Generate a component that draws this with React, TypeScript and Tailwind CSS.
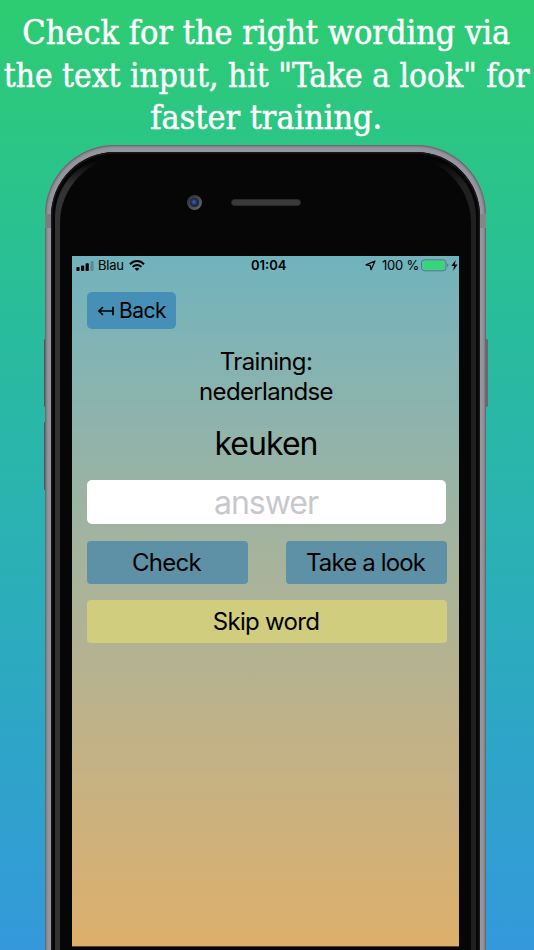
import React from "react";

function Signal() {
  return (
    <svg className="block" width="18" height="10" viewBox="0 0 18 10">
      <rect x="0.4" y="6" width="3.2" height="4" rx="0.8" />
      <rect x="5" y="4.5" width="3.2" height="5.5" rx="0.8" />
      <rect x="9.6" y="2.2" width="3.2" height="7.8" rx="0.8" />
      <rect x="14.4" y="0" width="3.2" height="10" rx="0.8" opacity="0.22" />
    </svg>
  );
}

function Wifi() {
  return (
    <svg className="block" width="16" height="11" viewBox="0 0 16 11">
      <g fill="none" stroke="#000" strokeWidth="2">
        <path d="M1 4.2C5 0 11 0 15 4.2" />
        <path d="M3.6 6.9c2.5-2.5 6.3-2.5 8.8 0" />
      </g>
      <path d="M5.6 8.6c1.4-1.3 3.4-1.3 4.8 0L8 11z" />
    </svg>
  );
}

function StatusBar() {
  return (
    <div className="flex h-[19px] items-center pl-[4px] text-[13px] leading-none">
      <Signal />
      <span className="ml-[4px] w-[26px] whitespace-nowrap tracking-[-0.2px]">Blau</span>
      <span className="ml-[5px]"><Wifi /></span>
      <span className="ml-[106px] w-[36px] whitespace-nowrap font-semibold">01:04</span>
      <svg className="ml-[78px] block" width="11" height="11" viewBox="0 0 11 11">
        <path d="M10 1 6 9.8 5.2 5.6 1 4.9z" fill="none" stroke="#000" strokeWidth="1.2" strokeLinejoin="round" />
      </svg>
      <span className="ml-[6px] w-[37px] whitespace-nowrap tracking-[-0.2px]">100 %</span>
      <svg className="ml-[2px] block" width="38" height="13" viewBox="0 0 38 13">
        <rect x="0.5" y="0.8" width="24.5" height="11" rx="3" fill="none" stroke="#4d7982" />
        <rect x="1.7" y="2" width="22.1" height="8.6" rx="2" fill="#32d974" />
        <path d="M26.2 4.5c1.6.6 1.6 3 0 3.6z" fill="#4d7982" />
        <path d="M34.8 1 30.3 7h2.8l-1 4.7L36.6 5.6h-2.9z" />
      </svg>
    </div>
  );
}

function Screen() {
  return (
    <div className="ml-[12px] h-[691px] w-[387px] border-b border-[#59472c] bg-gradient-to-b from-[#70b3bd] to-[#ddaf6a] font-[Inter,'Liberation_Sans',sans-serif] text-black">
      <StatusBar />
      <div className="pl-[15px] pr-[12px] pt-[17px]">
        <button className="flex h-[37px] w-[89px] items-center rounded-[5px] bg-[#468fb7] pl-[11px] text-[21px]">
          <svg className="block" width="16" height="12" viewBox="0 0 16 12" fill="none" stroke="#000" strokeWidth="1.7">
            <path d="M1 6h14M15 1.7v8.6M5 2 1 6l4 4" />
          </svg>
          <span className="ml-[5px] whitespace-nowrap tracking-[-0.5px]">Back</span>
        </button>
        <div className="mt-[18px] w-[358px] text-center text-[24px] leading-[30px] tracking-[-0.65px]">
          <div>Training:</div>
          <div>nederlandse</div>
        </div>
        <div className="mt-[17px] w-[358px] text-center text-[32px] leading-[40px] tracking-[-0.95px]">keuken</div>
        <input
          className="mt-[16px] block h-[44px] w-[359px] rounded-[5px] bg-white pr-[1px] pt-[2px] text-center text-[32px] tracking-[-1px] placeholder:text-[#c7c7cc] placeholder:opacity-100"
          placeholder="answer"
        />
        <div className="mt-[17px] flex w-[360px] justify-between text-[24px] tracking-[-0.7px]">
          <button className="h-[43px] w-[161px] rounded-[4px] bg-[#5e90a6] pr-[2px] pt-px">Check</button>
          <button className="h-[43px] w-[161px] rounded-[4px] bg-[#5e90a6] pr-[2px] pt-px tracking-[-0.85px]">Take a look</button>
        </div>
        <button className="mt-[16px] h-[43px] w-[360px] rounded-[4px] bg-[#d0cd7f] pr-[2px] pt-px text-[24px] tracking-[-0.7px]">Skip word</button>
      </div>
    </div>
  );
}

function Phone() {
  return (
    <div className="relative ml-[45px] h-[805px] w-[441px]">
      <div className="absolute left-[-1px] top-[194px] h-[68px] w-[3px] rounded-l-[1px] bg-[#54565d]" />
      <div className="absolute left-[-1px] top-[277px] h-[68px] w-[3px] rounded-l-[1px] bg-[#54565d]" />
      <div className="absolute right-[-2px] top-[194px] h-[68px] w-[3px] rounded-r-[1px] bg-[#66686f]" />
      <div className="relative h-[900px] rounded-t-[70px] bg-[#96969e] px-[6px] pt-[7px] shadow-[inset_0_0_0_1px_#696b70,inset_0_0_2px_2px_#7b7c83]">
        <div className="absolute left-0 top-[69px] h-[14px] w-[6px] bg-[#7b7d7e]" />
        <div className="absolute right-0 top-[69px] h-[14px] w-[6px] bg-[#858787]" />
        <div className="relative h-full rounded-t-[64px] bg-[#050505] px-[4px] pt-[5px] shadow-[inset_0_0_0_1.5px_#17181a]">
          <div className="h-full rounded-t-[60px] bg-[linear-gradient(to_bottom,#060606_4px,transparent_28px),linear-gradient(to_right,#333334,#202021)] px-[5px]">
            <div className="h-full overflow-hidden rounded-t-[66px] bg-[#060606]">
              <div className="flex h-[99px] items-center pb-[8px] pl-[127px]">
                <div className="flex size-[15px] items-center justify-center rounded-full bg-gradient-to-br from-[#292a2b] to-[#6c6d6e]">
                  <div className="size-[9px] rounded-full bg-[radial-gradient(circle_at_45%_45%,#365b9d_10%,#1b2b5b_45%,#17191f_80%)]" />
                </div>
                <div className="ml-[29px] h-[7px] w-[70px] rounded-full border border-[#292929] bg-[#3a3a3a]" />
              </div>
              <Screen />
            </div>
          </div>
        </div>
      </div>
    </div>
  );
}

export default function App() {
  return (
    <main className="h-[950px] w-[534px] overflow-hidden bg-gradient-to-b from-[#2ecc71] to-[#3498db]">
      <h1 className="flex h-[145px] flex-col items-center pr-px pt-[12px] font-['DejaVu_Serif_Condensed','DejaVu_Serif',serif] text-[33px] leading-[42.5px] text-white [-webkit-text-stroke:0.5px_white]">
        <span className="origin-center scale-x-[1.028] whitespace-nowrap">Check for the right wording via</span>
        <span className="origin-center scale-x-[1.005] whitespace-nowrap">the text input, hit "Take a look" for</span>
        <span className="origin-center scale-x-[1.024] whitespace-nowrap">faster training.</span>
      </h1>
      <Phone />
    </main>
  );
}
